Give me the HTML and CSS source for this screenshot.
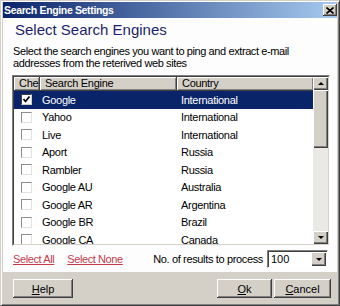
FILE: index.html
```html
<!DOCTYPE html>
<html lang="en">
<head>
    <meta charset="UTF-8">
    <title>Search Engine Settings</title>
    <link rel="stylesheet" href="styles.css">
</head>
<body>
    <div class="window">
        <div class="titlebar">
            <span class="title">Search Engine Settings</span>
            <span class="close">
                <svg width="8" height="7" viewBox="0 0 8 7"><path d="M0.5 0.5 L7.5 6.5 M7.5 0.5 L0.5 6.5" stroke="#000" stroke-width="1.6" fill="none"/></svg>
            </span>
        </div>

        <div class="panel">
            <h1>Select Search Engines</h1>
            <p class="desc">Select the search engines you want to ping and extract e-mail<br>addresses from the reterived web sites</p>

            <div class="listview">
                <div class="list-inner">
                    <div class="list-main">
                        <div class="list-head">
                            <div class="hcell col-chk">Che</div>
                            <div class="hcell col-name">Search Engine</div>
                            <div class="hcell col-country">Country</div>
                        </div>
                        <div class="row selected">
                            <div class="cell col-chk"><span class="chk checked"><svg width="9" height="9" viewBox="0 0 9 9"><path d="M1.5 4 L3.5 6.5 L7.5 1.5" stroke="#000" stroke-width="1.7" fill="none"/></svg></span></div>
                            <div class="cell col-name">Google</div>
                            <div class="cell col-country">International</div>
                        </div>
                        <div class="row">
                            <div class="cell col-chk"><span class="chk"></span></div>
                            <div class="cell col-name">Yahoo</div>
                            <div class="cell col-country">International</div>
                        </div>
                        <div class="row">
                            <div class="cell col-chk"><span class="chk"></span></div>
                            <div class="cell col-name">Live</div>
                            <div class="cell col-country">International</div>
                        </div>
                        <div class="row">
                            <div class="cell col-chk"><span class="chk"></span></div>
                            <div class="cell col-name">Aport</div>
                            <div class="cell col-country">Russia</div>
                        </div>
                        <div class="row">
                            <div class="cell col-chk"><span class="chk"></span></div>
                            <div class="cell col-name">Rambler</div>
                            <div class="cell col-country">Russia</div>
                        </div>
                        <div class="row">
                            <div class="cell col-chk"><span class="chk"></span></div>
                            <div class="cell col-name">Google AU</div>
                            <div class="cell col-country">Australia</div>
                        </div>
                        <div class="row">
                            <div class="cell col-chk"><span class="chk"></span></div>
                            <div class="cell col-name">Google AR</div>
                            <div class="cell col-country">Argentina</div>
                        </div>
                        <div class="row">
                            <div class="cell col-chk"><span class="chk"></span></div>
                            <div class="cell col-name">Google BR</div>
                            <div class="cell col-country">Brazil</div>
                        </div>
                        <div class="row">
                            <div class="cell col-chk"><span class="chk"></span></div>
                            <div class="cell col-name">Google CA</div>
                            <div class="cell col-country">Canada</div>
                        </div>
                    </div>
                    <div class="scrollbar">
                        <div class="sb-btn"><span class="arrow-up"></span></div>
                        <div class="sb-track">
                            <div class="sb-thumb"></div>
                        </div>
                        <div class="sb-btn"><span class="arrow-down"></span></div>
                    </div>
                </div>
            </div>

            <div class="options">
                <a class="link" href="#">Select All</a>
                <a class="link link-none" href="#">Select None</a>
                <span class="results-label">No. of results to process</span>
                <div class="combo">
                    <span class="combo-value">100</span>
                    <span class="combo-btn"><span class="arrow-down"></span></span>
                </div>
            </div>
        </div>

        <div class="buttons">
            <button class="btn btn-help"><u>H</u>elp</button>
            <button class="btn btn-ok"><u>O</u>k</button>
            <button class="btn btn-cancel"><u>C</u>ancel</button>
        </div>
    </div>
</body>
</html>
```

FILE: styles.css
```css
body {
    margin: 0;
    font-family: "Liberation Sans", Arial, sans-serif;
    font-size: 11px;
    background-color: #d4d0c8;
}
.window {
    width: 340px;
    height: 306px;
    box-sizing: border-box;
    border: 1px solid;
    border-color: #d4d0c8 #404040 #404040 #d4d0c8;
    box-shadow: inset 1px 1px #fff, inset -1px -1px #808080;
    padding: 1px 2px 2px;
    display: flex;
    flex-direction: column;
    background-color: #d4d0c8;
}
.titlebar {
    height: 16px;
    flex: none;
    display: flex;
    align-items: center;
    justify-content: space-between;
    padding: 0 0 0 1px;
    background: linear-gradient(to right, #0a246a, #a6caf0);
    color: #fff;
}
.title {
    font-weight: bold;
    font-size: 10.5px;
    letter-spacing: -0.35px;
}
.close {
    width: 14px;
    height: 12px;
    box-sizing: border-box;
    display: flex;
    align-items: center;
    justify-content: center;
    background-color: #d4d0c8;
    box-shadow: inset -1px -1px #404040, inset 1px 1px #fff, inset -2px -2px #808080;
}
.panel {
    flex: none;
    height: 254px;
    box-sizing: border-box;
    background-color: #fdfdfd;
    padding: 3px 7px 4px 9px;
}
h1 {
    margin: 0 0 6px 3px;
    font-size: 15px;
    line-height: 18px;
    font-weight: normal;
    color: #1c1f6b;
}
.desc {
    margin: 0 0 6px 1px;
    line-height: 12px;
    letter-spacing: -0.4px;
    color: #000;
}
.listview {
    height: 171px;
    box-sizing: border-box;
    border: 1px solid;
    border-color: #808080 #fff #fff #808080;
}
.list-inner {
    height: 100%;
    box-sizing: border-box;
    border: 1px solid;
    border-color: #404040 #d4d0c8 #d4d0c8 #404040;
    display: flex;
    background-color: #fff;
}
.list-main {
    flex: 1;
    overflow: hidden;
}
.list-head {
    height: 14px;
    display: flex;
    background-color: #d4d0c8;
}
.hcell {
    box-sizing: border-box;
    height: 14px;
    line-height: 13px;
    padding-left: 5px;
    letter-spacing: -0.3px;
    box-shadow: inset 1px 1px #fff, inset -1px -1px #808080;
    border-right: 1px solid #404040;
    border-bottom: 1px solid #404040;
    white-space: nowrap;
    overflow: hidden;
}
.hcell.col-chk {
    padding-left: 5px;
}
.hcell.col-country {
    border-right: none;
}
.col-chk {
    width: 26px;
    flex: none;
}
.col-name {
    width: 137px;
    flex: none;
}
.col-country {
    flex: 1;
}
.row {
    height: 17.5px;
    display: flex;
    align-items: center;
    color: #000;
}
.row.selected {
    background-color: #0a246a;
    color: #fff;
}
.cell {
    padding-left: 2px;
    letter-spacing: -0.3px;
    white-space: nowrap;
}
.cell.col-chk {
    padding-left: 7px;
    box-sizing: border-box;
    display: flex;
}
.chk {
    width: 11px;
    height: 11px;
    box-sizing: border-box;
    border: 1px solid;
    border-color: #8c8c8c #e4e2dc #e4e2dc #8c8c8c;
    background-color: #fff;
    display: flex;
    align-items: center;
    justify-content: center;
}
.chk.checked {
    border-color: #404040 #d4d0c8 #d4d0c8 #404040;
}
.scrollbar {
    width: 15px;
    flex: none;
    display: flex;
    flex-direction: column;
}
.sb-btn {
    height: 13px;
    flex: none;
    display: flex;
    align-items: center;
    justify-content: center;
    background-color: #d4d0c8;
    box-shadow: inset 1px 1px #fff, inset -1px -1px #404040, inset -2px -2px #808080;
}
.sb-track {
    flex: 1;
    background-color: #ebe9e4;
}
.sb-thumb {
    height: 58px;
    background-color: #d4d0c8;
    box-shadow: inset 1px 1px #fff, inset -1px -1px #404040, inset -2px -2px #808080;
}
.arrow-up {
    width: 0;
    height: 0;
    border-left: 3px solid transparent;
    border-right: 3px solid transparent;
    border-bottom: 3px solid #000;
}
.arrow-down {
    width: 0;
    height: 0;
    border-left: 3px solid transparent;
    border-right: 3px solid transparent;
    border-top: 3px solid #000;
}
.options {
    margin-top: 4px;
    height: 18px;
    display: flex;
    align-items: center;
}
.link {
    color: #c23a4a;
    text-decoration: underline;
    letter-spacing: -0.4px;
    margin-left: 1px;
}
.link-none {
    margin-left: 13px;
}
.results-label {
    margin-left: auto;
    margin-right: 4px;
    letter-spacing: -0.35px;
}
.combo {
    width: 61px;
    height: 18px;
    margin-right: 2px;
    box-sizing: border-box;
    border: 1px solid;
    border-color: #808080 #fff #fff #808080;
    box-shadow: inset 1px 1px #404040;
    background-color: #fff;
    display: flex;
    align-items: center;
}
.combo-value {
    flex: 1;
    padding-left: 3px;
}
.combo-btn {
    width: 15px;
    height: 14px;
    margin-right: 1px;
    display: flex;
    align-items: center;
    justify-content: center;
    background-color: #d4d0c8;
    box-shadow: inset 1px 1px #fff, inset -1px -1px #404040, inset -2px -2px #808080;
}
.buttons {
    flex: 1;
    display: flex;
    align-items: flex-start;
    padding: 7px 6px 0 10px;
}
.btn {
    height: 19px;
    padding: 0;
    border: none;
    font-family: "Liberation Sans", Arial, sans-serif;
    font-size: 11px;
    color: #000;
    background-color: #d4d0c8;
    box-shadow: inset -1px -1px #404040, inset 1px 1px #fff, inset -2px -2px #808080;
}
.btn-help {
    width: 60px;
}
.btn-ok {
    width: 55px;
    margin-left: auto;
}
.btn-cancel {
    width: 57px;
    margin-left: 2px;
}
```
